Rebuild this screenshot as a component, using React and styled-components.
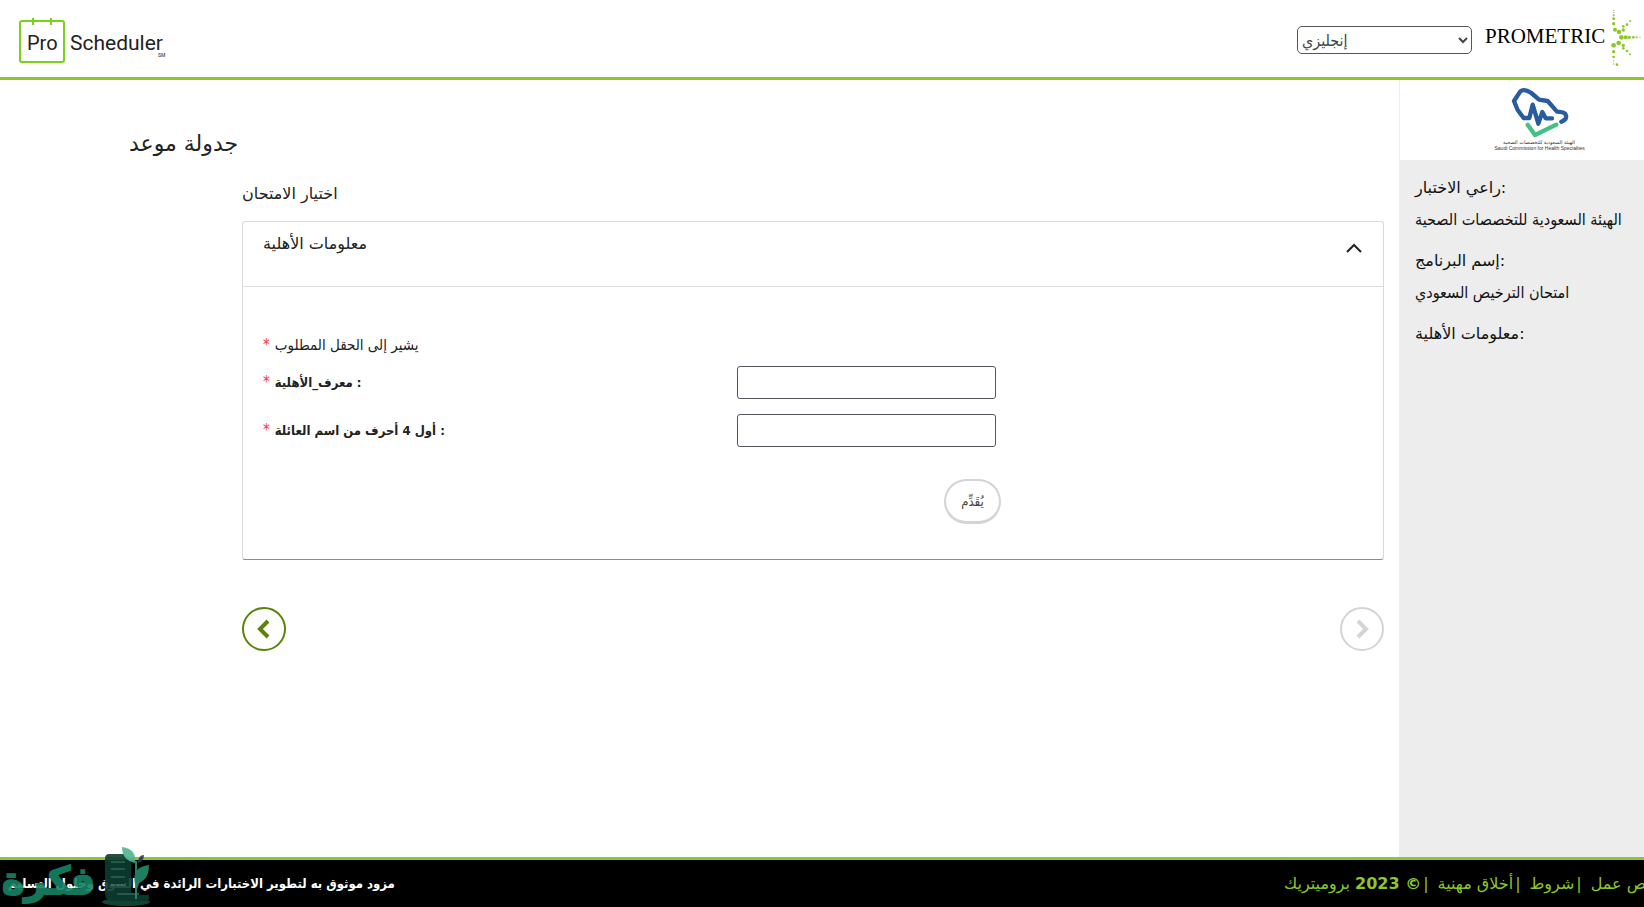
import React from "react";
import styled, { createGlobalStyle } from "styled-components";

const condensed = `"DejaVu Sans Condensed", "DejaVu Sans", sans-serif`;

const GlobalStyle = createGlobalStyle`
  * {
    box-sizing: border-box;
  }

  body {
    margin: 0;
    background: #fff;
    color: #222;
    font-family: "DejaVu Sans", sans-serif;
    font-size: 16px;
    line-height: 24px;
  }
`;

const Page = styled.div`
  min-height: 100vh;
  display: flex;
  flex-direction: column;
`;

const Header = styled.header`
  height: 80px;
  display: flex;
  align-items: flex-start;
  justify-content: space-between;
  padding: 8px 0 0 18px;
  border-bottom: 3px solid #8dc728;
`;

const HeaderRight = styled.div`
  display: flex;
  align-items: flex-start;
`;

const BrandLogo = styled.svg`
  width: 150px;
  height: 50px;
  margin-top: 9px;
`;

const LanguageSelect = styled.select`
  width: 175px;
  height: 28px;
  margin: 18px 13px 0 0;
  padding: 0;
  border: 1px solid #55555d;
  border-radius: 5px;
  background: #fff;
  color: #444;
  font-family: ${condensed};
  font-size: 16px;
`;

const Wordmark = styled.span`
  width: 124px;
  margin-top: 16px;
  color: #000;
  font-family: "Liberation Serif", serif;
  font-size: 21px;
  line-height: 24px;
`;

const PrometricMark = styled.svg`
  width: 35px;
  height: 60px;
`;

const Content = styled.div`
  flex: 1;
  display: flex;
`;

const Main = styled.main`
  flex: 1;
  padding: 46px 15px 0 129px;
`;

const Title = styled.h1`
  margin: 0;
  font-size: 22px;
  font-weight: 400;
  line-height: 36px;
`;

const Section = styled.section`
  margin-left: 113px;
`;

const SectionTitle = styled.h2`
  margin: 20px 0 15px;
  font-size: 16px;
  font-weight: 400;
  line-height: 24px;
`;

const Panel = styled.div`
  border: 1px solid #d9d9d9;
  border-bottom-color: #8c8c8c;
  border-radius: 3px;
`;

const PanelHeader = styled.button`
  width: 100%;
  height: 65px;
  display: flex;
  align-items: flex-start;
  justify-content: space-between;
  padding: 10px 20px;
  border: 0;
  border-bottom: 1px solid #dedede;
  background: none;
  color: #222;
  font-family: inherit;
  font-size: 16px;
  line-height: 24px;
`;

const ChevronUp = styled.svg`
  width: 18px;
  height: 10px;
  margin-top: 11px;
`;

const Form = styled.form`
  padding: 46px 20px 35px;
`;

const Hint = styled.p`
  margin: 0 0 9px;
  font-family: ${condensed};
  font-size: 15px;
`;

const Required = styled.span`
  margin-right: 5px;
  color: #f33;
  font-size: 15px;
  font-weight: 400;
`;

const Field = styled.div`
  display: grid;
  grid-template-columns: 41% 259px;
  column-gap: 23px;
  align-items: center;
  margin-bottom: 15px;
`;

const Label = styled.label`
  font-family: ${condensed};
  font-size: 13px;
  font-weight: 700;
`;

const TextInput = styled.input`
  height: 33px;
  border: 1px solid #55555d;
  border-radius: 3px;
  font-size: 16px;
`;

const Actions = styled.div`
  display: grid;
  grid-template-columns: 41% 264px;
  column-gap: 23px;
  padding-top: 17px;
`;

const SubmitButton = styled.button`
  grid-column: 2;
  justify-self: end;
  width: 57px;
  height: 45px;
  padding: 0;
  border: 2px solid #d4d4d4;
  border-bottom-width: 3px;
  border-radius: 23px;
  background: #fff;
  color: #444;
  font-family: ${condensed};
  font-size: 13px;
`;

const Pager = styled.nav`
  display: flex;
  justify-content: space-between;
  margin-top: 47px;
`;

const PagerButton = styled.button`
  width: 44px;
  height: 44px;
  display: flex;
  align-items: center;
  justify-content: center;
  padding: 0;
  border: 2px solid;
  border-radius: 50%;
  background: #fff;
  color: ${({ disabled }) => (disabled ? "#d4d4d4" : "#598409")};
`;

const Sidebar = styled.aside`
  width: 245px;
  background: #ededed;
`;

const SponsorBox = styled.div`
  height: 80px;
  padding: 7px 0 0 93px;
  border-left: 1px solid #ededed;
  background: #fff;
`;

const SponsorLogo = styled.svg`
  width: 94px;
  height: 66px;
`;

const Details = styled.dl`
  margin: 0;
  padding: 16px;
  color: #111;
  white-space: nowrap;
`;

const Term = styled.dt`
  line-height: 24px;
`;

const Value = styled.dd`
  margin: 8px 0 17px;
  font-family: ${condensed};
  line-height: 24px;
`;

const Footer = styled.footer`
  position: relative;
  height: 50px;
  display: flex;
  align-items: center;
  justify-content: space-between;
  padding-left: 8px;
  border-top: 3px solid #8dc728;
  background: #000;
  white-space: nowrap;
`;

const Tagline = styled.strong`
  color: #fff;
  font-family: ${condensed};
  font-size: 13px;
`;

const FooterLinks = styled.div`
  width: 360px;
  display: flex;
  overflow: hidden;
  color: #8dc728;
`;

const FooterLink = styled.a`
  flex: none;
  color: #8dc728;
  text-decoration: none;
`;

const Separator = styled.span`
  margin: 0 9px 0 2px;
`;

const Watermark = styled.div`
  position: absolute;
  left: 0;
  bottom: 0;
  display: flex;
  align-items: flex-end;
  opacity: 0.9;
  pointer-events: none;
`;

const WatermarkText = styled.span`
  width: 101px;
  padding-left: 2px;
  color: #168365;
  font-size: 38px;
  font-weight: 700;
  line-height: 52px;
  -webkit-text-stroke: 2px #168365;
`;

const WatermarkArt = styled.svg`
  width: 50px;
  height: 60px;
`;

const PROMETRIC_DOTS = [
  [14, 7, 2], [14, 14, 2], [14, 22, 3], [14, 32, 4], [14, 47, 5],
  [18, 65, 6], [30, 72, 7], [43, 66, 5], [43, 55, 4], [54, 50, 4],
  [63, 39, 3], [37, 88, 7], [50, 88, 6], [61, 88, 5], [73, 88, 4],
  [83, 88, 3], [93, 88, 2], [14, 112, 7], [29, 105, 7], [43, 112, 5],
  [43, 121, 4], [54, 129, 4], [63, 139, 3], [14, 131, 5], [14, 147, 4],
  [14, 158, 2], [14, 168, 2], [24, 170, 4],
];

const ProScheduler = () => (
  <BrandLogo viewBox="0 0 150 50" role="img" aria-label="ProScheduler">
    <rect x="2" y="4" width="44" height="41" rx="2" fill="none" stroke="#7bd01b" strokeWidth="2" />
    <path d="M15 1v7M33 1v7" stroke="#7bd01b" strokeWidth="2" />
    <g fill="#222" fontFamily="Roboto" fontSize="21">
      <text x="9" y="33" fontSize="20">Pro</text>
      <text x="52" y="33">Scheduler</text>
      <text x="140" y="40" fontSize="5">SM</text>
    </g>
  </BrandLogo>
);

const HealthCommission = () => (
  <SponsorLogo viewBox="0 0 282 198">
    <g fill="none" strokeWidth="13" strokeLinecap="round" strokeLinejoin="round">
      <path
        stroke="#285b9f"
        d="M205 104Q224 97 218 83Q215 75 192 74L164 42L138 38L115 18Q93 4 82 13L63 42L74 69L92 93H109L119 53L136 110L148 75L158 94H177"
      />
      <path stroke="#43c185" d="M104 113L126 144L190 113" />
    </g>
    <g fill="#333" textAnchor="middle">
      <text x="138" y="171" fontFamily="DejaVu Sans" fontSize="15">الهيئة السعودية للتخصصات الصحية</text>
      <text x="140" y="189" fontFamily="Liberation Sans" fontSize="15">Saudi Commission for Health Specialties</text>
    </g>
  </SponsorLogo>
);

const Arrow = ({ d }) => (
  <svg width="18" height="22" viewBox="0 0 18 22" aria-hidden="true">
    <path d={d} fill="none" stroke="currentColor" strokeWidth="4" />
  </svg>
);

const FormField = ({ id, label }) => (
  <Field>
    <Label htmlFor={id}>
      <Required>*</Required>
      {label} :
    </Label>
    <TextInput id={id} type="text" />
  </Field>
);

const App = () => {
  return (
    <Page>
      <GlobalStyle />
      <Header>
        <ProScheduler />
        <HeaderRight>
          <LanguageSelect aria-label="اللغة">
            <option>إنجليزي</option>
          </LanguageSelect>
          <Wordmark>PROMETRIC</Wordmark>
          <PrometricMark viewBox="0 0 105 180" aria-hidden="true">
            {PROMETRIC_DOTS.map(([cx, cy, r]) => (
              <circle key={`${cx}-${cy}`} cx={cx} cy={cy} r={r} fill="#8dc728" />
            ))}
          </PrometricMark>
        </HeaderRight>
      </Header>

      <Content>
        <Main>
          <Title>جدولة موعد</Title>
          <Section>
            <SectionTitle>اختيار الامتحان</SectionTitle>
            <Panel>
              <PanelHeader type="button" aria-expanded="true">
                معلومات الأهلية
                <ChevronUp viewBox="0 0 18 10">
                  <path d="M2 9L9 2L16 9" fill="none" stroke="#222" strokeWidth="2" />
                </ChevronUp>
              </PanelHeader>
              <Form>
                <Hint>
                  <Required>*</Required>
                  يشير إلى الحقل المطلوب
                </Hint>
                <FormField id="eligibility" label="معرف_الأهلية" />
                <FormField id="surname" label="أول 4 أحرف من اسم العائلة" />
                <Actions>
                  <SubmitButton type="button">يُقَدِّم</SubmitButton>
                </Actions>
              </Form>
            </Panel>
            <Pager>
              <PagerButton type="button" aria-label="السابق">
                <Arrow d="M13 3L5 11L13 19" />
              </PagerButton>
              <PagerButton type="button" aria-label="التالي" disabled>
                <Arrow d="M5 3L13 11L5 19" />
              </PagerButton>
            </Pager>
          </Section>
        </Main>

        <Sidebar>
          <SponsorBox>
            <HealthCommission />
          </SponsorBox>
          <Details>
            <Term>راعي الاختبار:</Term>
            <Value>الهيئة السعودية للتخصصات الصحية</Value>
            <Term>إسم البرنامج:</Term>
            <Value>امتحان الترخيص السعودي</Value>
            <Term>معلومات الأهلية:</Term>
          </Details>
        </Sidebar>
      </Content>

      <Footer>
        <Tagline dir="rtl">مزود موثوق به لتطوير الاختبارات الرائدة في السوق وحلول التسليم</Tagline>
        <FooterLinks>
          <FooterLink href="#copyright" dir="rtl">
            <b>© 2023</b> بروميتريك
          </FooterLink>
          <Separator>|</Separator>
          <FooterLink href="#ethics">أخلاق مهنية</FooterLink>
          <Separator>|</Separator>
          <FooterLink href="#terms">شروط</FooterLink>
          <Separator>|</Separator>
          <FooterLink href="#privacy">نص عمل</FooterLink>
        </FooterLinks>
        <Watermark>
          <WatermarkText>فكرة</WatermarkText>
          <WatermarkArt viewBox="0 0 50 60" aria-hidden="true">
            <ellipse cx="25" cy="55" rx="24" ry="4" fill="#124b3b" />
            <path d="M8 7H30V48H48V52Q48 54 44 54H12Q4 54 4 46V12Q4 7 8 7Z" fill="#0d3c30" />
            <path d="M10 15H24M10 22H24M10 30H24M10 38H24M16 47H38" stroke="#2b6257" strokeWidth="2" />
            <path d="M35 52V14M35 42Q38 32 44 26" fill="none" stroke="#2a9277" strokeWidth="2" />
            <path d="M34 16Q21 13 21 0Q36 2 34 16Z" fill="#4fb491" />
            <path d="M34 37Q30 20 48 18Q48 35 34 37Z" fill="#238b6b" />
            <path d="M37 16Q37 8 43 8Q43 14 37 16Z" fill="#2b3b50" />
          </WatermarkArt>
        </Watermark>
      </Footer>
    </Page>
  );
};

export default App;
